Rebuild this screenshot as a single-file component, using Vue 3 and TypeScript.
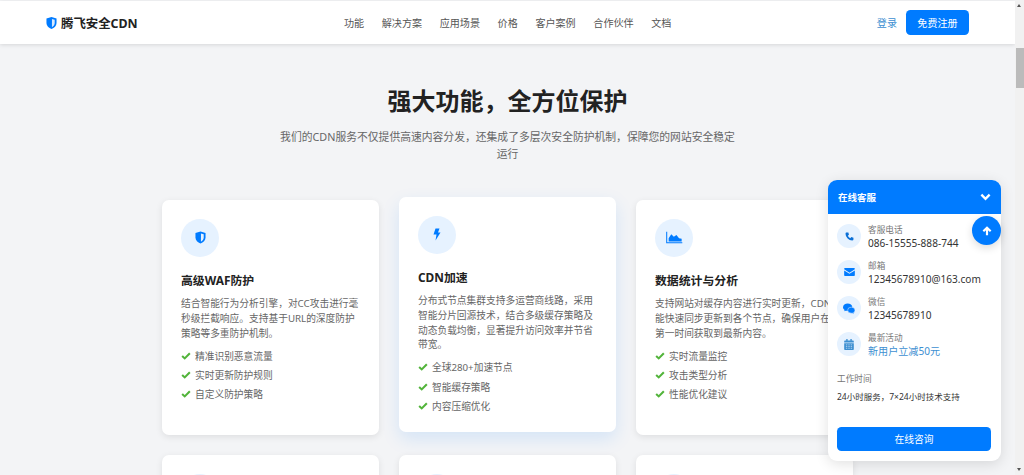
<script setup lang="ts">
const navLinks: string[] = ['功能', '解决方案', '应用场景', '价格', '客户案例', '合作伙伴', '文档']

interface Card {
  icon: 'shield' | 'bolt' | 'chart'
  title: string
  desc: string
  items: string[]
  raised?: boolean
}

const cards: Card[] = [
  {
    icon: 'shield',
    title: '高级WAF防护',
    desc: '结合智能行为分析引擎，对CC攻击进行毫秒级拦截响应。支持基于URL的深度防护策略等多重防护机制。',
    items: ['精准识别恶意流量', '实时更新防护规则', '自定义防护策略'],
  },
  {
    icon: 'bolt',
    title: 'CDN加速',
    desc: '分布式节点集群支持多运营商线路，采用智能分片回源技术，结合多级缓存策略及动态负载均衡，显著提升访问效率并节省带宽。',
    items: ['全球280+加速节点', '智能缓存策略', '内容压缩优化'],
    raised: true,
  },
  {
    icon: 'chart',
    title: '数据统计与分析',
    desc: '支持网站对缓存内容进行实时更新，CDN能快速同步更新到各个节点，确保用户在第一时间获取到最新内容。',
    items: ['实时流量监控', '攻击类型分析', '性能优化建议'],
  },
]
</script>

<template>
  <div class="page">
    <div class="main">
      <header class="nav">
        <div class="brand">
          <svg class="brand-icon" viewBox="0 0 24 28">
            <path d="M12 1 L23 4 V14 C23 20 18 25 12 27 C6 25 1 20 1 14 V4 Z" fill="#007bff" />
            <path d="M13 5.5 L19 7 V14 C19 18 16.5 21 13 23 Z" fill="#d6e9ff" />
          </svg>
          <span>腾飞安全CDN</span>
        </div>
        <nav class="links">
          <a v-for="l in navLinks" :key="l">{{ l }}</a>
        </nav>
        <div class="actions">
          <a class="login">登录</a>
          <button class="signup">免费注册</button>
        </div>
      </header>

      <section class="features">
        <h1>强大功能，全方位保护</h1>
        <p class="lead">我们的CDN服务不仅提供高速内容分发，还集成了多层次安全防护机制，保障您的网站安全稳定运行</p>
        <div class="grid">
          <article v-for="c in cards" :key="c.title" class="card" :class="{ raised: c.raised }">
            <div class="card-icon">
              <svg v-if="c.icon === 'shield'" viewBox="0 0 24 28" width="11" height="13">
                <path d="M12 1 L23 4 V14 C23 20 18 25 12 27 C6 25 1 20 1 14 V4 Z" fill="#007bff" />
                <path d="M13 5.5 L19 7 V14 C19 18 16.5 21 13 23 Z" fill="#e6f2ff" />
              </svg>
              <svg v-else-if="c.icon === 'bolt'" viewBox="0 0 16 26" width="8" height="13">
                <path d="M5 1 H13 L10 9 H15 L5 25 L7 13 H1 Z" fill="#007bff" />
              </svg>
              <svg v-else viewBox="0 0 26 20" width="17" height="13">
                <path d="M1 1 V18 H25" fill="none" stroke="#007bff" stroke-width="1.6" />
                <path d="M4 16 V11 L8 5 L12 9 L16 6 L20 11 L24 12 V16 Z" fill="#007bff" />
              </svg>
            </div>
            <h3>{{ c.title }}</h3>
            <p class="desc">{{ c.desc }}</p>
            <ul>
              <li v-for="i in c.items" :key="i">
                <svg viewBox="0 0 12 10" width="10" height="8">
                  <path d="M1.2 5 L4.4 8 L10.8 1.6" fill="none" stroke="#52b43a" stroke-width="2.6" />
                </svg>
                <span>{{ i }}</span>
              </li>
            </ul>
          </article>
          <article v-for="n in 3" :key="'next' + n" class="card stub">
            <div class="card-icon"></div>
          </article>
        </div>
      </section>
    </div>

    <div class="scrollbar">
      <div class="arrow up"></div>
      <div class="thumb"></div>
      <div class="arrow down"></div>
    </div>

    <aside class="service">
      <div class="service-head">
        <span>在线客服</span>
        <svg viewBox="0 0 12 8" width="11" height="8">
          <path d="M1.5 1.5 L6 6 L10.5 1.5" fill="none" stroke="#fff" stroke-width="2.6" />
        </svg>
      </div>
      <div class="service-body">
        <div class="row">
          <div class="row-icon">
            <svg viewBox="0 0 16 16" width="9" height="9">
              <path d="M3 1 L6 1 L7 5 L5 6.5 C6 8.5 7.5 10 9.5 11 L11 9 L15 10 V13 C15 14.5 14 15 13 15 C7 15 1 9 1 3 C1 2 1.5 1 3 1 Z" fill="#0a6fd6" />
            </svg>
          </div>
          <div class="row-text"><span class="label">客服电话</span><span class="value">086-15555-888-744</span></div>
        </div>
        <div class="row">
          <div class="row-icon">
            <svg viewBox="0 0 16 12" width="11" height="8">
              <path d="M0 1.5 C0 .6 .6 0 1.5 0 H14.5 C15.4 0 16 .6 16 1.5 V2 L8 7 L0 2 Z" fill="#007bff" />
              <path d="M0 3.8 L8 8.8 L16 3.8 V10.5 C16 11.4 15.4 12 14.5 12 H1.5 C.6 12 0 11.4 0 10.5 Z" fill="#007bff" />
            </svg>
          </div>
          <div class="row-text"><span class="label">邮箱</span><span class="value">12345678910@163.com</span></div>
        </div>
        <div class="row">
          <div class="row-icon">
            <svg viewBox="0 0 18 16" width="12" height="11">
              <ellipse cx="7" cy="6" rx="7" ry="5.6" fill="#007bff" />
              <path d="M2.5 9 L2 12 L5.5 10.5 Z" fill="#007bff" />
              <ellipse cx="12.5" cy="10.5" rx="5.5" ry="4.5" fill="#007bff" stroke="#e6f2ff" stroke-width=".8" />
              <path d="M15.5 13.5 L16 16 L13 14.5 Z" fill="#007bff" />
            </svg>
          </div>
          <div class="row-text"><span class="label">微信</span><span class="value">12345678910</span></div>
        </div>
        <div class="row">
          <div class="row-icon">
            <svg viewBox="0 0 14 16" width="10" height="11">
              <path d="M3 0 H5 V2 H9 V0 H11 V2 H12.5 C13.4 2 14 2.6 14 3.5 V5 H0 V3.5 C0 2.6 .6 2 1.5 2 H3 Z" fill="#3d8fd1" />
              <path d="M0 6 H14 V14.5 C14 15.4 13.4 16 12.5 16 H1.5 C.6 16 0 15.4 0 14.5 Z" fill="#3d8fd1" />
              <path d="M2.5 8.5 H11.5 M2.5 11 H11.5 M2.5 13.5 H11.5" stroke="#e6f2ff" stroke-width=".9" stroke-dasharray="2 1.5" />
            </svg>
          </div>
          <div class="row-text"><span class="label">最新活动</span><span class="value link">新用户立减50元</span></div>
        </div>
        <div class="hours">
          <div class="hours-label">工作时间</div>
          <div class="hours-value">24小时服务，7×24小时技术支持</div>
        </div>
        <button class="consult">在线咨询</button>
      </div>
      <button class="to-top" aria-label="返回顶部">
        <svg viewBox="0 0 12 12" width="10" height="10">
          <path d="M6 11 V2.5 M1.6 6.4 L6 2 L10.4 6.4" fill="none" stroke="#fff" stroke-width="2.6" />
        </svg>
      </button>
    </aside>
  </div>
</template>

<style>
html, body { margin: 0; height: 100%; overflow: hidden; }
</style>

<style scoped>
.page {
  position: relative;
  display: flex;
  width: 1024px;
  height: 475px;
  overflow: hidden;
  background: #f3f4f6;
  font-family: "Noto Sans", "Noto Sans CJK SC", sans-serif;
  color: #333;
}
.main { flex: 1; min-width: 0; }
.nav {
  display: flex;
  align-items: center;
  height: 43px;
  margin-top: 1px;
  padding: 0 46px;
  background: #fff;
  box-shadow: 0 1px 4px rgba(0, 0, 0, .12);
  position: relative;
}
.brand {
  display: flex;
  align-items: center;
  gap: 4px;
  width: 298px;
  font-size: 12.4px;
  font-weight: 700;
  color: #222;
}
.brand-icon { width: 11px; height: 14px; }
.links { display: flex; gap: 17.6px; }
.links a { font-size: 10.08px; color: #555; }
.actions { margin-left: auto; display: flex; align-items: center; gap: 9px; }
.login { font-size: 10.08px; color: #3d8fd1; }
.signup {
  width: 63px;
  height: 25px;
  border: 0;
  border-radius: 4.5px;
  background: #007bff;
  color: #fff;
  font: inherit;
  font-size: 10.08px;
  padding: 0;
}
.features { display: flex; flex-direction: column; align-items: center; padding-top: 39px; }
h1 {
  margin: 0;
  font-size: 24px;
  line-height: 36px;
  font-weight: 700;
  color: #222;
}
.lead {
  width: 460px;
  margin: 9px 0 0;
  font-size: 10.8px;
  line-height: 17.28px;
  color: #666;
  text-align: center;
}
.grid {
  display: grid;
  grid-template-columns: repeat(3, 217px);
  gap: 20px;
  margin-top: 37.4px;
}
.card {
  box-sizing: border-box;
  height: 235px;
  padding: 19px;
  background: #fff;
  border-radius: 7px;
  box-shadow: 0 2px 7px rgba(0, 0, 0, .09);
}
.card.raised {
  transform: translateY(-3px);
  box-shadow: 0 7px 18px rgba(0, 123, 255, .13);
}
.card-icon {
  display: flex;
  align-items: center;
  justify-content: center;
  width: 38px;
  height: 38px;
  border-radius: 50%;
  background: #e6f2ff;
}
h3 {
  margin: 13px 0 0;
  font-size: 11.88px;
  line-height: 20px;
  font-weight: 700;
  color: #222;
}
.desc {
  margin: 7.5px 0 0;
  font-size: 9.72px;
  line-height: 14.6px;
  color: #666;
}
ul { list-style: none; margin: 5px 0 0; padding: 0; }
li {
  display: flex;
  align-items: center;
  gap: 4px;
  height: 19.2px;
  font-size: 9.72px;
  color: #666;
}
.scrollbar {
  position: relative;
  flex: none;
  width: 9px;
  background: #f1f1f1;
}
.thumb {
  position: absolute;
  top: 48px;
  left: 1px;
  right: 0;
  height: 40px;
  background: #bbb;
}
.arrow {
  position: absolute;
  left: 2px;
  width: 0;
  height: 0;
  border-left: 2.5px solid transparent;
  border-right: 2.5px solid transparent;
}
.arrow.up { top: 4px; border-bottom: 3px solid #555; }
.arrow.down { bottom: 4px; border-top: 3px solid #555; }
.service {
  position: absolute;
  left: 828px;
  top: 180px;
  width: 173px;
  height: 281px;
  border-radius: 9px;
  background: #fff;
  box-shadow: 0 3px 14px rgba(0, 0, 0, .12);
}
.service-head {
  display: flex;
  align-items: center;
  justify-content: space-between;
  height: 34px;
  padding: 0 10px;
  border-radius: 9px 9px 0 0;
  background: #007bff;
  color: #fff;
  font-size: 9.5px;
  font-weight: 700;
}
.service-body { padding: 10px 9px 0; }
.row { display: flex; align-items: center; gap: 7px; height: 24px; margin-bottom: 12px; }
.row-icon {
  flex: none;
  display: flex;
  align-items: center;
  justify-content: center;
  width: 24px;
  height: 24px;
  border-radius: 50%;
  background: #e6f2ff;
}
.row-text { display: flex; flex-direction: column; }
.label { padding-top: 1px; font-size: 8.64px; line-height: 12px; color: #777; }
.value { font-size: 10.08px; line-height: 14px; color: #333; }
.value.link { color: #3d8fd1; }
.hours { margin-top: 17px; }
.hours-label { font-size: 8.64px; line-height: 12px; color: #777; }
.hours-value { margin-top: 6px; font-size: 8.5px; line-height: 12px; color: #333; }
.consult {
  display: block;
  width: 154px;
  height: 24px;
  margin-top: 24px;
  padding: 0;
  border: 0;
  border-radius: 4.5px;
  background: #007bff;
  color: #fff;
  font: inherit;
  font-size: 9.72px;
}
.to-top {
  position: absolute;
  left: 144px;
  top: 36px;
  display: flex;
  align-items: center;
  justify-content: center;
  width: 29px;
  height: 29px;
  padding: 0;
  border: 0;
  border-radius: 50%;
  background: #007bff;
  box-shadow: 0 3px 8px rgba(0, 0, 0, .14);
}
</style>
